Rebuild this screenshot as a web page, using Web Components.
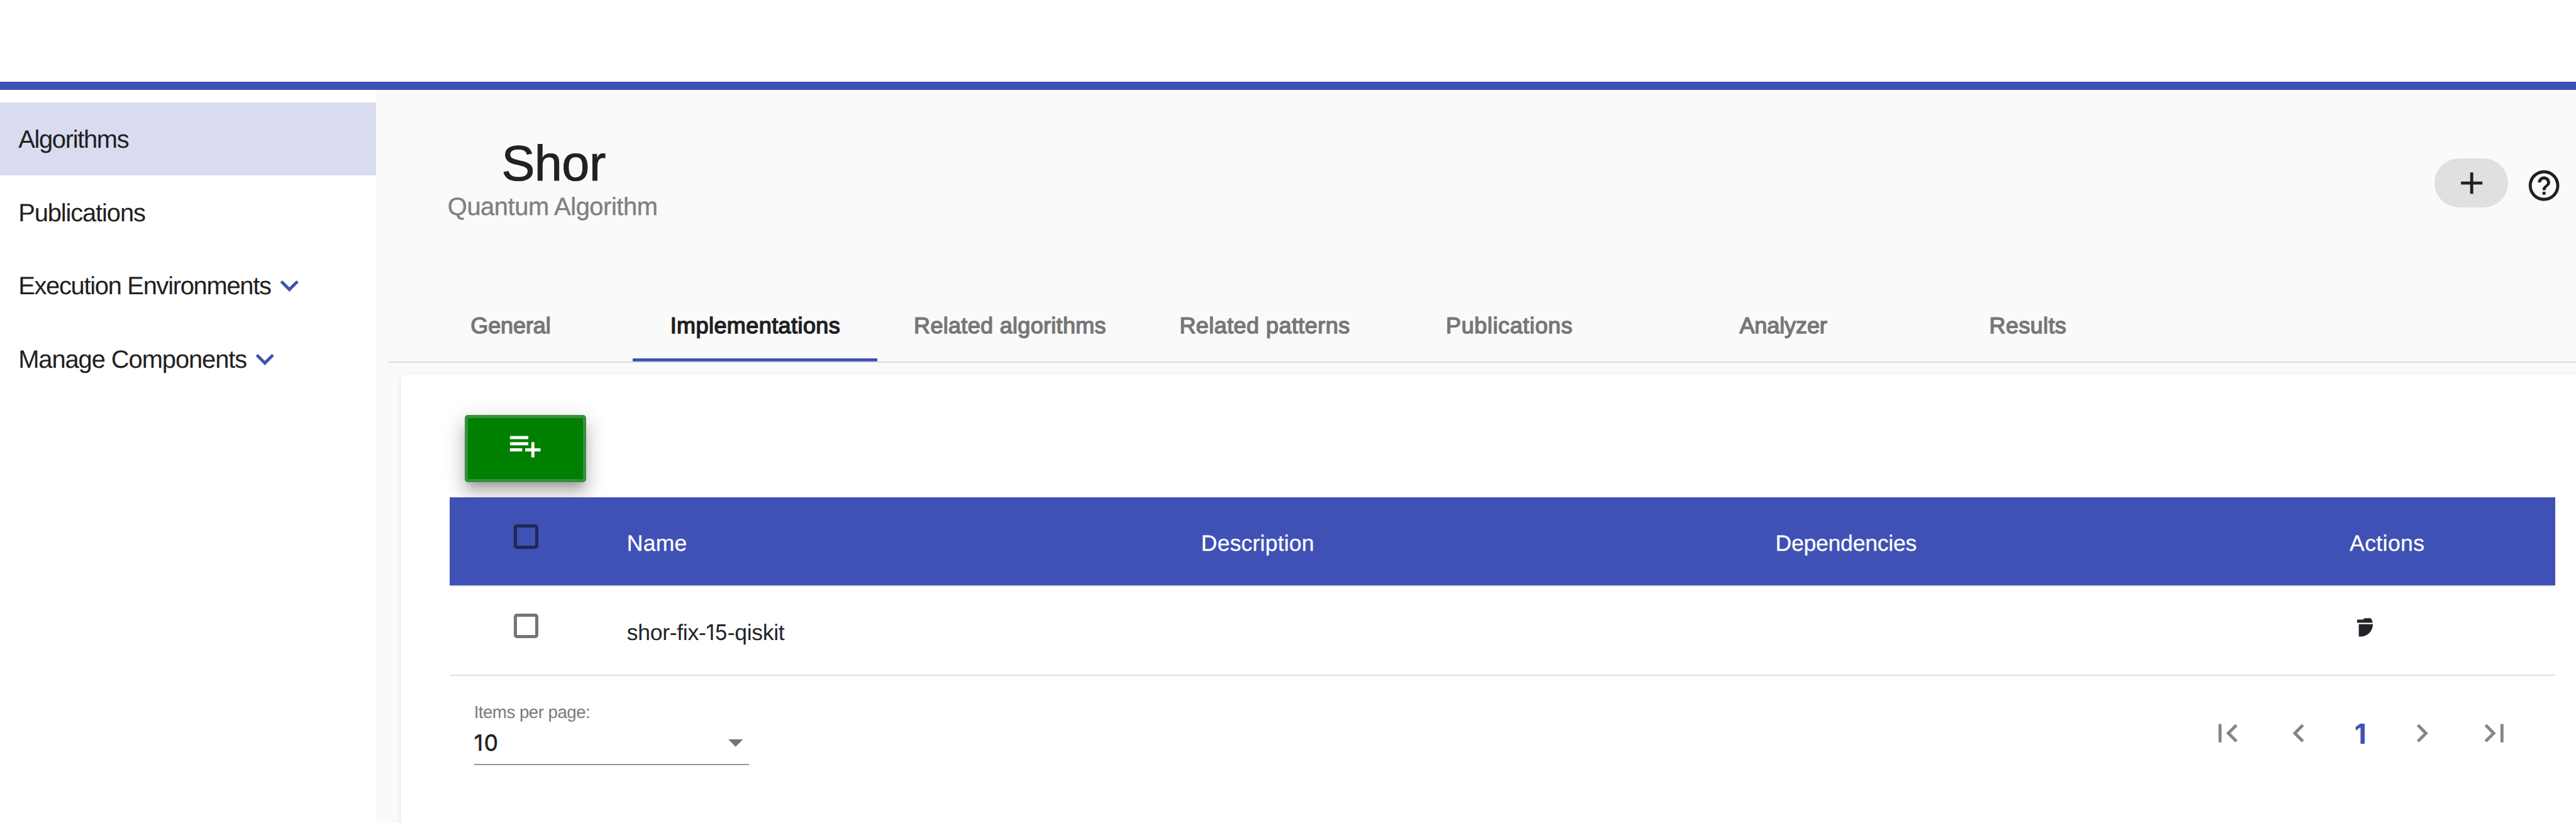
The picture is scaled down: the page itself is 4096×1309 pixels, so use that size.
<!DOCTYPE html>
<html lang="en">
<head>
<meta charset="utf-8">
<title>Shor – Implementations</title>
<style>
  html, body { margin: 0; background: #fff; overflow: hidden; }
  body { font-family: "Liberation Sans", Arial, sans-serif; color: #212121; text-rendering: geometricPrecision; }
</style>
</head>
<body>
<atlas-app></atlas-app>

<script>
const define = (name, html, setup) => {
  const tpl = document.createElement('template');
  tpl.innerHTML = html;
  customElements.define(name, class extends HTMLElement {
    connectedCallback() {
      if (this.shadowRoot) return;
      this.attachShadow({ mode: 'open' }).appendChild(tpl.content.cloneNode(true));
      if (setup) setup(this, this.shadowRoot);
    }
  });
};

/* One line of text. `ink` is its drawn width; letter spacing makes up the difference.
   Digits are set in a face whose "1" has no foot. */
const ctx = document.createElement('canvas').getContext('2d');
define('atlas-text', `
  <style>
    :host { display: block; white-space: nowrap; flex: none; padding-top: 1.4px; margin-bottom: -1.4px; }
    .d { font-family: Inter, sans-serif; line-height: 1; }
  </style><span class="line"></span>`, (host, root) => {
  const size = +host.getAttribute('size');
  const bold = host.hasAttribute('bold');
  const stroke = host.getAttribute('stroke');
  const line = root.querySelector('.line');
  const text = host.getAttribute('label');
  host.style.fontSize = size + 'px';
  if (bold) host.style.fontWeight = 700;
  if (stroke) host.style.webkitTextStroke = stroke + 'px currentColor';
  const parts = text.match(/\d+|\D+/g);
  let total = 0;
  parts.forEach((p, i) => {
    const digits = /\d/.test(p);
    const s = document.createElement('span');
    s.textContent = p;
    if (digits) { s.className = 'd'; s.style.fontSize = size * 0.965 + 'px'; }
    line.appendChild(s);
    ctx.font = (bold ? '700 ' : '400 ') + (digits ? size * 0.965 + 'px Inter' : size + 'px "Liberation Sans"');
    const m = ctx.measureText(p);
    total += m.width;
    if (i === 0) total += m.actualBoundingBoxLeft;
    if (i === parts.length - 1) total -= m.width - m.actualBoundingBoxRight;
  });
  const ink = +host.getAttribute('ink');
  if (ink && text.length > 1) line.style.letterSpacing = (ink - total) / (text.length - 1) + 'px';
});

const ICONS = {
  add: 'M19 13h-6v6h-2v-6H5v-2h6V5h2v6h6v2z',
  help: 'M11 18h2v-2h-2v2zm1-16C6.48 2 2 6.48 2 12s4.48 10 10 10 10-4.48 10-10S17.52 2 12 2zm0 18c-4.41 0-8-3.59-8-8s3.59-8 8-8 8 3.59 8 8-3.59 8-8 8zm0-14c-2.21 0-4 1.79-4 4h2c0-1.1.9-2 2-2s2 .9 2 2c0 2-3 1.75-3 5h2c0-2.25 3-2.5 3-5 0-2.21-1.79-4-4-4z',
  playlist: 'M14 10H2v2h12v-2zm0-4H2v2h12V6zm4 8v-4h-2v4h-4v2h4v4h2v-4h4v-2h-4zM2 16h8v-2H2v2z',
  expand: 'M16.59 8.59L12 13.17 7.41 8.59 6 10l6 6 6-6z',
  first: 'M18.41 16.59L13.82 12l4.59-4.59L17 6l-6 6 6 6zM6 6h2v12H6z',
  prev: 'M15.41 7.41L14 6l-6 6 6 6 1.41-1.41L10.83 12z',
  next: 'M10 6L8.59 7.41 13.17 12l-4.58 4.59L10 18l6-6z',
  last: 'M5.59 7.41L10.18 12l-4.59 4.59L7 18l6-6-6-6zM16 6h2v12h-2z'
};
define('atlas-icon', `
  <style>:host { display: block; width: 60px; height: 60px; flex: none; } svg { display: block; width: 100%; height: 100%; }</style>
  <svg viewBox="0 0 24 24" fill="currentColor"><path/></svg>`, (host, root) => {
  root.querySelector('path').setAttribute('d', ICONS[host.getAttribute('name')]);
});

define('atlas-nav-item', `
  <style>
    :host { display: flex; align-items: center; height: 120px; line-height: 120px; padding-left: 30px; }
    :host([active]) { background: #d9dbf0; }
    ::slotted(atlas-icon) { color: #3f51b5; }
  </style><slot></slot>`);

define('atlas-sidebar', `
  <style>:host { display: block; width: 615px; flex: none; padding-top: 20px; background: #fff; overflow: hidden; } atlas-nav-item { box-sizing: border-box; }</style>
  <atlas-nav-item active><atlas-text label="Algorithms" size="41" ink="181"></atlas-text></atlas-nav-item>
  <atlas-nav-item><atlas-text label="Publications" size="41" ink="205"></atlas-text></atlas-nav-item>
  <atlas-nav-item><atlas-text label="Execution Environments" size="41" ink="410.7"></atlas-text><atlas-icon name="expand"></atlas-icon></atlas-nav-item>
  <atlas-nav-item><atlas-text label="Manage Components" size="41" ink="371"></atlas-text><atlas-icon name="expand"></atlas-icon></atlas-nav-item>`);

define('atlas-heading', `
  <style>
    :host { display: flex; justify-content: space-between; height: 324px; box-sizing: border-box; padding-right: 22px; }
    .titles { padding: 68px 0 0 117px; }
    .title { line-height: 100px; margin-left: 88px; }
    .sub { line-height: 44px; color: #808080; }
    .actions { display: flex; gap: 29px; padding-top: 112px; color: #202020; }
    .pill { display: flex; justify-content: center; align-items: center; width: 120px; height: 80px; border-radius: 40px; background: #e0e0e0; }
    .help { margin-top: 14px; }
  </style>
  <div class="titles">
    <atlas-text class="title" label="Shor" size="81.5" ink="166.5" stroke="1"></atlas-text>
    <atlas-text class="sub" label="Quantum Algorithm" size="41" ink="342.7" stroke="0.4"></atlas-text>
  </div>
  <div class="actions">
    <div class="pill"><atlas-icon name="add"></atlas-icon></div>
    <atlas-icon class="help" name="help"></atlas-icon>
  </div>`);

define('atlas-tab', `
  <style>
    :host { display: flex; flex-direction: column; align-items: center; width: 400px; height: 120px; line-height: 120px; color: #777; }
    :host([active]) { color: #202020; background: linear-gradient(#3f51b5, #3f51b5) bottom / 100% 5px no-repeat; }
  </style><slot></slot>`);

define('atlas-tabs', `
  <style>
    :host { display: block; margin-left: 20px; }
    .row { display: flex; }
    .rule { height: 2px; background: #dcdcdc; }
    .wide { width: 433px; }
    .gap { margin-left: 48px; }
  </style>
  <div class="row">
    <atlas-tab><atlas-text label="General" size="37" ink="128" stroke="1.5"></atlas-text></atlas-tab>
    <atlas-tab active><atlas-text label="Implementations" size="37" ink="274.4" stroke="1.5"></atlas-text></atlas-tab>
    <atlas-tab class="wide"><atlas-text label="Related algorithms" size="37" ink="310.7" stroke="1.5"></atlas-text></atlas-tab>
    <atlas-tab><atlas-text label="Related patterns" size="37" ink="275" stroke="1.5"></atlas-text></atlas-tab>
    <atlas-tab><atlas-text label="Publications" size="37" ink="203.5" stroke="1.5"></atlas-text></atlas-tab>
    <atlas-tab class="gap"><atlas-text label="Analyzer" size="37" ink="143" stroke="1.5"></atlas-text></atlas-tab>
    <atlas-tab><atlas-text label="Results" size="37" ink="122.5" stroke="1.5"></atlas-text></atlas-tab>
  </div>
  <div class="rule"></div>`);

define('atlas-checkbox', `
  <style>:host { display: block; box-sizing: border-box; width: 40px; height: 40px; border: 5.2px solid currentColor; border-radius: 5px; }</style>`);

define('atlas-row', `
  <style>
    :host { display: block; color: #212529; }
    .cells { display: grid; grid-template-columns: 290px 939px 939px 939px 1fr; height: 144px; line-height: 149px; }
    .check { padding: 44px 0 0 105px; color: #757575; }
    .rule { height: 2px; background: #dde0e3; }
    :host([head]) { color: #fff; }
    :host([head]) .cells { background: #3f51b5; }
    :host([head]) .check { color: #1f2855; }
    :host([head]) .rule { background: #e0e0ea; }
  </style>
  <div class="cells"><div class="check"><atlas-checkbox></atlas-checkbox></div><slot></slot></div>
  <div class="rule"></div>`);

define('atlas-delete', `
  <style>:host { display: block; padding: 51.5px 0 0 12px; } svg { display: block; }</style>
  <svg width="26" height="31" viewBox="14.3 11.4 26 31" fill="currentColor">
    <path d="M14.3 14H23.6Q25 13.6 26 11.7H36.5Q38.7 14 39.9 19H14.3zM17 21.4H40A20 20 0 0 1 17 41.6z"/>
  </svg>`);

define('atlas-paginator', `
  <style>
    :host { display: flex; justify-content: space-between; padding: 40px 70px 0 40px; }
    .field { width: 450px; }
    .label { line-height: 36px; color: #7a7a7a; }
    .value { display: flex; align-items: center; justify-content: space-between; height: 66px; line-height: 66px; padding-right: 10px; color: #212121; }
    .value svg { margin-top: 2px; }
    .rule { height: 2px; margin-top: 2px; background: #949494; }
    .pages { display: flex; align-items: center; height: 60px; margin-top: 24px; color: #858585; }
    .first { margin-right: 57px; }
    .current { display: flex; justify-content: center; width: 141px; line-height: 53px; color: #3f51b5; }
    .next { margin-right: 58px; }
  </style>
  <div class="field">
    <atlas-text class="label" label="Items per page:" size="28.5" ink="186.5"></atlas-text>
    <div class="value"><atlas-text label="10" size="37.5" ink="36.5" stroke="0.6"></atlas-text>
      <svg width="24" height="12" viewBox="0 0 24 12"><path d="M0 0H24L12 12z" fill="#757575"/></svg></div>
    <div class="rule"></div>
  </div>
  <div class="pages">
    <atlas-icon class="first" name="first"></atlas-icon>
    <atlas-icon name="prev"></atlas-icon>
    <div class="current"><atlas-text label="1" size="47" bold></atlas-text></div>
    <atlas-icon class="next" name="next"></atlas-icon>
    <atlas-icon name="last"></atlas-icon>
  </div>`);

define('atlas-add-button', `
  <style>
    :host { display: flex; justify-content: center; box-sizing: border-box; width: 198px; height: 110px; margin: 0 0 25px 25px; padding-top: 15px;
      border: 5.2px solid #398f3e; border-radius: 5px; background: #008000; color: #fff;
      box-shadow: 0 12.5px 12.5px -7.5px rgba(0,0,0,.2), 0 20px 25px 2.5px rgba(0,0,0,.14), 0 7.5px 35px 5px rgba(0,0,0,.12); }
  </style><atlas-icon name="playlist"></atlas-icon>`);

define('atlas-card', `
  <style>
    :host { display: block; margin: 20px -20px 0 40px; padding: 65px 54px 200px 80px; border-radius: 10px; background: #fff;
      box-shadow: 0 5px 2.5px -2.5px rgba(0,0,0,.2), 0 2.5px 2.5px rgba(0,0,0,.12), 0 2.5px 7.5px rgba(0,0,0,.07); }
    .table { position: relative; }
  </style>
  <atlas-add-button></atlas-add-button>
  <div class="table">
    <atlas-row head>
      <atlas-text label="Name" size="36.5" ink="94" stroke="0.3"></atlas-text>
      <atlas-text label="Description" size="36.5" ink="179.5" stroke="0.3"></atlas-text>
      <atlas-text label="Dependencies" size="36.5" ink="227" stroke="0.3"></atlas-text>
      <atlas-text label="Actions" size="36.5" ink="121" stroke="0.3"></atlas-text>
    </atlas-row>
    <atlas-row>
      <atlas-text label="shor-fix-15-qiskit" size="36.5" ink="257"></atlas-text>
      <span></span><span></span>
      <atlas-delete></atlas-delete>
    </atlas-row>
  </div>
  <atlas-paginator></atlas-paginator>`);

define('atlas-app', `
  <style>
    :host { display: flex; flex-direction: column; width: 4212px; height: 1346px; overflow: hidden; zoom: 0.97246; }
    .bar { flex: none; height: 134px; border-bottom: 14.1px solid #3f51b5; background: #fff; }
    .body { flex: 1; display: flex; min-height: 0; }
    main { flex: 1; min-width: 0; background: #fafafa; overflow: hidden; }
  </style>
  <div class="bar"></div>
  <div class="body">
    <atlas-sidebar></atlas-sidebar>
    <main><atlas-heading></atlas-heading><atlas-tabs></atlas-tabs><atlas-card></atlas-card></main>
  </div>`);
</script>
</body>
</html>
